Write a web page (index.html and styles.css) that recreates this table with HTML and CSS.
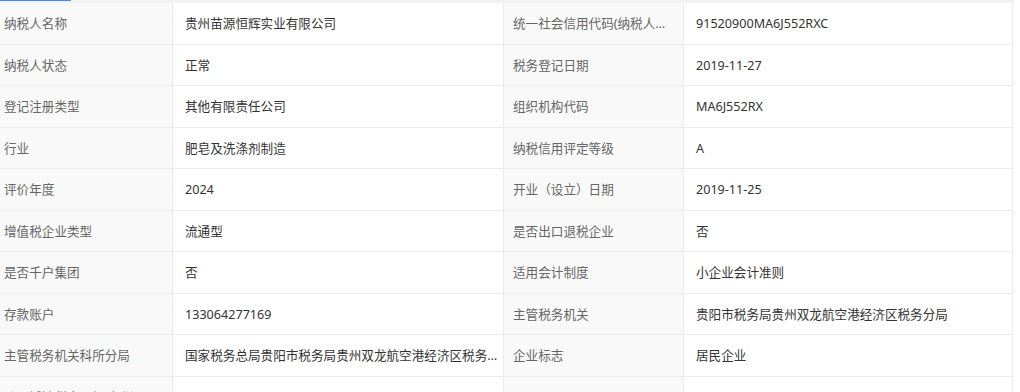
FILE: index.html
```html
<!DOCTYPE html>
<html lang="zh-CN">
<head>
<meta charset="utf-8">
<title>纳税人信息</title>
<link rel="stylesheet" href="styles.css">
</head>
<body>
<div class="tabbar"><span class="tab-active"></span></div>
<div class="viewport">
  <div class="info-table">
    <div class="cell label">纳税人名称</div>
    <div class="cell value">贵州苗源恒辉实业有限公司</div>
    <div class="cell label">统一社会信用代码(纳税人识别号)</div>
    <div class="cell value">91520900MA6J552RXC</div>

    <div class="cell label">纳税人状态</div>
    <div class="cell value">正常</div>
    <div class="cell label">税务登记日期</div>
    <div class="cell value">2019-11-27</div>

    <div class="cell label">登记注册类型</div>
    <div class="cell value">其他有限责任公司</div>
    <div class="cell label">组织机构代码</div>
    <div class="cell value">MA6J552RX</div>

    <div class="cell label">行业</div>
    <div class="cell value">肥皂及洗涤剂制造</div>
    <div class="cell label">纳税信用评定等级</div>
    <div class="cell value">A</div>

    <div class="cell label">评价年度</div>
    <div class="cell value">2024</div>
    <div class="cell label">开业（设立）日期</div>
    <div class="cell value">2019-11-25</div>

    <div class="cell label">增值税企业类型</div>
    <div class="cell value">流通型</div>
    <div class="cell label">是否出口退税企业</div>
    <div class="cell value">否</div>

    <div class="cell label">是否千户集团</div>
    <div class="cell value">否</div>
    <div class="cell label">适用会计制度</div>
    <div class="cell value">小企业会计准则</div>

    <div class="cell label">存款账户</div>
    <div class="cell value">133064277169</div>
    <div class="cell label">主管税务机关</div>
    <div class="cell value">贵阳市税务局贵州双龙航空港经济区税务分局</div>

    <div class="cell label">主管税务机关科所分局</div>
    <div class="cell value">国家税务总局贵阳市税务局贵州双龙航空港经济区税务分局第一税务所</div>
    <div class="cell label">企业标志</div>
    <div class="cell value">居民企业</div>

    <div class="cell label">跨区域涉税事项报验登记信息</div>
    <div class="cell value">否</div>
    <div class="cell label"></div>
    <div class="cell value"></div>
  </div>
</div>
</body>
</html>
```

FILE: styles.css
```css
html, body {
  margin: 0;
  padding: 0;
  background: #ffffff;
}

body {
  font-family: "Noto Sans", "Noto Sans CJK SC", sans-serif;
  font-size: 12.6px;
  color: #333333;
  overflow: hidden;
}

.tabbar {
  width: 1014px;
  height: 3px;
  background: #f2f2f2;
  display: flex;
  align-items: flex-start;
}

.tab-active {
  width: 71px;
  height: 1px;
  background: #3c8cff;
}

.viewport {
  width: 1020px;
  overflow: hidden;
}

.info-table {
  margin-left: -6px;
  width: 1019px;
  display: grid;
  grid-template-columns: 178px 331px 180px 330px;
  grid-auto-rows: 41.5px;
  border-right: 1px solid #ebebeb;
  box-sizing: border-box;
}

.cell {
  box-sizing: border-box;
  display: block;
  min-width: 0;
  border-left: 1px solid #ebebeb;
  border-bottom: 1px solid #ebebeb;
  white-space: nowrap;
  overflow: hidden;
  text-overflow: ellipsis;
  padding-top: 2px;
  line-height: 38.5px;
}

.cell.label {
  background: #f9f9f9;
  color: #666666;
  padding-left: 9px;
  padding-right: 12px;
}

.cell.value {
  color: #333333;
  padding-left: 12px;
  padding-right: 4px;
}
```
